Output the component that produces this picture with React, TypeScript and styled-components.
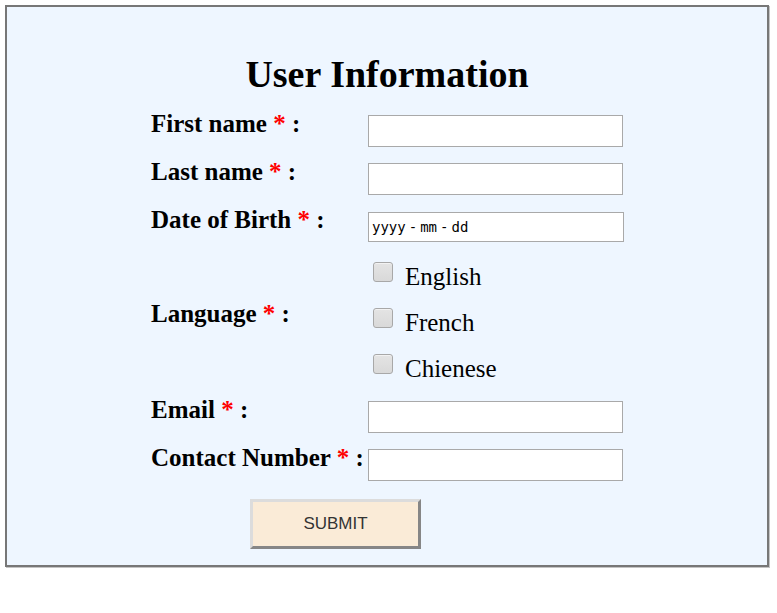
import React from 'react';
import styled, { createGlobalStyle } from 'styled-components';

const Global = createGlobalStyle`
  html, body { margin: 0; padding: 0; background: #fff; }
  body { font-family: "Liberation Serif", "Times New Roman", serif; color: #000; }
`;

const Panel = styled.div`
  box-sizing: border-box;
  width: 764px;
  margin: 5px;
  border: 2px solid #777;
  box-shadow: 1px 1px 0 #c4c4c4;
  background: #eef6ff;
  padding: 46px 0 16px;
`;

const Title = styled.h1`
  margin: 0 0 15px;
  font-size: 38px;
  line-height: 42px;
  font-weight: bold;
  text-align: center;
`;

const Form = styled.form`
  width: 472px;
  margin: 0 auto;
  display: flex;
  flex-direction: column;
`;

const Row = styled.div<{ $gap?: number }>`
  display: grid;
  grid-template-columns: 217px 255px;
  align-items: start;
  margin-bottom: ${(p) => p.$gap ?? 11}px;
`;

const Label = styled.label<{ $top?: number }>`
  font-size: 25px;
  line-height: 28px;
  font-weight: bold;
  white-space: nowrap;
  margin-top: ${(p) => p.$top ?? 0}px;
`;

const Req = styled.span`
  color: #ff0000;
`;

const TextInput = styled.input`
  box-sizing: border-box;
  width: 255px;
  height: 32px;
  margin: 5px 0 0;
  border: 1px solid #a9a9a9;
  background: #fff;
  padding: 0 3px;
  font: 16px "Liberation Sans", Arial, sans-serif;
`;

const DateBox = styled.div`
  box-sizing: border-box;
  width: 256px;
  height: 30px;
  margin-top: 6px;
  border: 1px solid #a9a9a9;
  background: #fff;
  display: flex;
  align-items: center;
  padding-left: 3px;
  font: 14px "DejaVu Sans Mono", monospace;
  color: #000;
`;

const Sep = styled.span`
  margin: 0 3px;
`;

const CheckGroup = styled.div`
  display: flex;
  flex-direction: column;
`;

const CheckLine = styled.label`
  font-size: 25px;
  line-height: 46px;
  white-space: nowrap;
`;

const Box = styled.input`
  appearance: none;
  -webkit-appearance: none;
  box-sizing: border-box;
  width: 20px;
  height: 20px;
  margin: 3px 12px 3px 5px;
  vertical-align: baseline;
  border: 1px solid #a8a8a8;
  border-radius: 3px;
  background: linear-gradient(#e4e4e4, #d9d9d9);
  box-shadow: inset 0 1px 0 #f2f2f2;
`;

const Submit = styled.button`
  box-sizing: border-box;
  width: 171px;
  height: 50px;
  margin-left: 99px;
  border-width: 3px;
  border-style: solid;
  border-color: #dcdcdc #868686 #868686 #dcdcdc;
  background: #faebd7;
  color: #333;
  font: 17px "Liberation Sans", Arial, sans-serif;
  padding: 0;
`;

const SubmitRow = styled.div`
  display: flex;
`;

const Field: React.FC<{ label: string; gap?: number }> = ({ label, gap }) => (
  <Row $gap={gap}>
    <Label>
      {label} <Req>*</Req> :
    </Label>
    <TextInput type="text" />
  </Row>
);

export default function App() {
  return (
    <>
      <Global />
      <Panel>
        <Title>User Information</Title>
        <Form onSubmit={(e) => e.preventDefault()}>
          <Field label="First name" />
          <Field label="Last name" />
          <Row $gap={12}>
            <Label>
              Date of Birth <Req>*</Req> :
            </Label>
            <DateBox>
              <span>yyyy</span>
              <Sep>-</Sep>
              <span>mm</span>
              <Sep>-</Sep>
              <span>dd</span>
            </DateBox>
          </Row>
          <Row $gap={4}>
            <Label $top={46}>
              Language <Req>*</Req> :
            </Label>
            <CheckGroup>
              <CheckLine>
                <Box type="checkbox" />English
              </CheckLine>
              <CheckLine>
                <Box type="checkbox" />French
              </CheckLine>
              <CheckLine>
                <Box type="checkbox" />Chienese
              </CheckLine>
            </CheckGroup>
          </Row>
          <Field label="Email" />
          <Field label="Contact Number" gap={18} />
          <SubmitRow>
            <Submit type="submit">SUBMIT</Submit>
          </SubmitRow>
        </Form>
      </Panel>
    </>
  );
}
